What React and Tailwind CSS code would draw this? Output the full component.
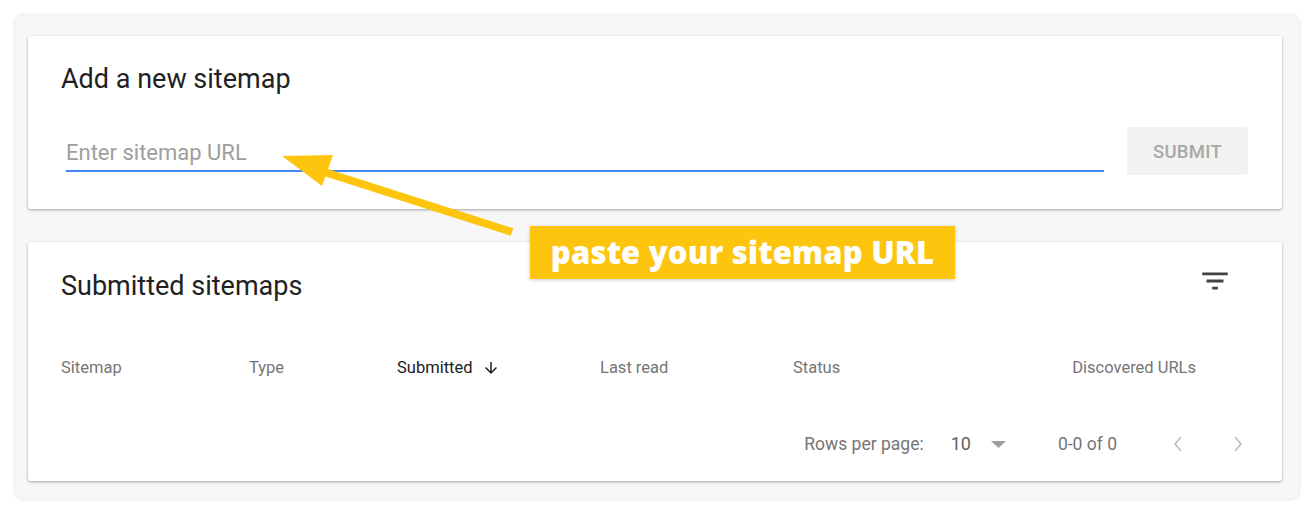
import React from "react";

function FilterIcon() {
  return (
    <svg width="34" height="34" viewBox="0 0 24 24" fill="#424242">
      <path d="M10 18h4v-2h-4v2zM3 6v2h18V6H3zm3 7h12v-2H6v2z" />
    </svg>
  );
}

function ArrowDown() {
  return (
    <svg width="18" height="18" viewBox="0 0 24 24" fill="#212121">
      <path d="M20 12l-1.41-1.41L13 16.17V4h-2v12.17l-5.58-5.59L4 12l8 8 8-8z" />
    </svg>
  );
}

export default function App() {
  return (
    <div
      className="relative w-[1314px] h-[515px] bg-white pt-[14px] pl-[14px]"
      style={{ fontFamily: "Roboto, 'Liberation Sans', sans-serif" }}
    >
      <div className="w-[1286px] h-[486px] bg-[#f7f7f7] rounded-[10px] border border-[#efefef] shadow-[0_0_4px_rgba(0,0,0,0.06)] pt-[21px] pl-[13px] flex flex-col">
        {/* Card 1 */}
        <div className="w-[1254px] h-[173px] bg-white rounded-[2px] shadow-[0_1px_3px_rgba(0,0,0,0.35)] pt-[27px] pl-[33px] pr-[34px]">
          <div className="text-[27px] leading-[32px] text-[#212121]">Add a new sitemap</div>
          <div className="flex items-start mt-[32px]">
            <div className="flex-1 ml-[5px] mr-[23px] h-[45px] border-b-2 border-[#4285f4] pt-[12px]">
              <div className="text-[22px] leading-[28px] text-[#9e9e9e]">Enter sitemap URL</div>
            </div>
            <div className="w-[121px] h-[48px] bg-[#f2f2f2] rounded-[4px] flex items-center justify-center pt-[3px] text-[18.5px] font-medium text-[#a8a8a8] tracking-[0.3px]">
              SUBMIT
            </div>
          </div>
        </div>

        {/* Card 2 */}
        <div className="mt-[33px] w-[1254px] h-[239px] bg-white rounded-[2px] shadow-[0_1px_3px_rgba(0,0,0,0.35)] flex flex-col">
          <div className="flex items-start justify-between pl-[33px] pr-[50px] pt-[22px]">
            <div className="text-[27px] leading-[32px] text-[#212121] mt-[6px]">Submitted sitemaps</div>
            <FilterIcon />
          </div>
          <div className="mt-[55px] grid grid-cols-[188px_148px_203px_193px_1fr_auto] pl-[33px] pr-[86px] text-[16.5px] leading-[22px] text-[#757575]">
            <div>Sitemap</div>
            <div>Type</div>
            <div className="flex items-center text-[#212121]">
              Submitted
              <span className="ml-[9px] flex"><ArrowDown /></span>
            </div>
            <div>Last read</div>
            <div>Status</div>
            <div className="text-right">Discovered URLs</div>
          </div>
          <div className="mt-[53px] flex items-center justify-end pr-[38px] text-[17.5px] leading-[24px] text-[#757575]">
            <span>Rows per page:</span>
            <span className="ml-[27px] text-[#616161] text-[18px]">10</span>
            <svg className="ml-[20px]" width="15" height="7" viewBox="0 0 15 7">
              <path d="M0 0h15L7.5 7z" fill="#9e9e9e" />
            </svg>
            <span className="ml-[52px]">0-0 of 0</span>
            <svg className="ml-[55px]" width="12" height="18" viewBox="0 0 12 18" fill="none">
              <path d="M9 2L3 9l6 7" stroke="#bdbdbd" strokeWidth="1.6" />
            </svg>
            <svg className="ml-[48px]" width="12" height="18" viewBox="0 0 12 18" fill="none">
              <path d="M3 2l6 7-6 7" stroke="#bdbdbd" strokeWidth="1.6" />
            </svg>
          </div>
        </div>
      </div>

      {/* Annotation arrow */}
      <svg className="absolute left-0 top-0 pointer-events-none" width="1314" height="515">
        <line x1="318" y1="170" x2="512" y2="232" stroke="#fec50f" strokeWidth="8" />
        <polygon points="282,156 333,155 322,186" fill="#fec50f" />
      </svg>

      {/* Annotation label */}
      <div className="absolute left-[530px] top-[226px] w-[425px] h-[53px] bg-[#fec50f] shadow-[0_1px_4px_rgba(0,0,0,0.2)] flex items-center justify-center">
        <span
          className="text-white text-[31px] font-extrabold leading-none tracking-[0.2px]"
          style={{ fontFamily: "'Open Sans', sans-serif" }}
        >
          paste your sitemap URL
        </span>
      </div>
    </div>
  );
}
